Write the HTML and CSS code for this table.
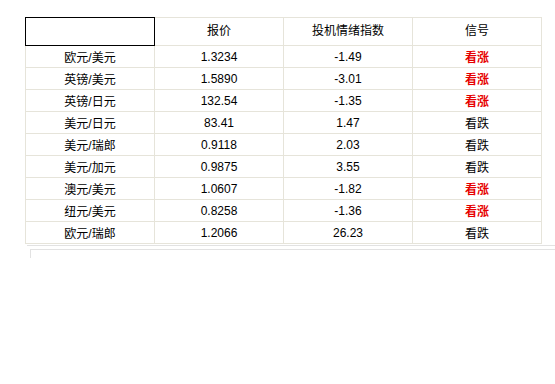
FILE: index.html
```html
<!DOCTYPE html>
<html lang="zh-CN">
<head>
    <meta charset="UTF-8">
    <title>外汇信号</title>
    <link rel="stylesheet" href="styles.css">
</head>
<body>
    <table class="quotes">
        <tr class="head">
            <th class="blank"></th>
            <th>报价</th>
            <th>投机情绪指数</th>
            <th>信号</th>
        </tr>
        <tr><td>欧元/美元</td><td>1.3234</td><td>-1.49</td><td class="up">看涨</td></tr>
        <tr><td>英镑/美元</td><td>1.5890</td><td>-3.01</td><td class="up">看涨</td></tr>
        <tr><td>英镑/日元</td><td>132.54</td><td>-1.35</td><td class="up">看涨</td></tr>
        <tr><td>美元/日元</td><td>83.41</td><td>1.47</td><td>看跌</td></tr>
        <tr><td>美元/瑞郎</td><td>0.9118</td><td>2.03</td><td>看跌</td></tr>
        <tr><td>美元/加元</td><td>0.9875</td><td>3.55</td><td>看跌</td></tr>
        <tr><td>澳元/美元</td><td>1.0607</td><td>-1.82</td><td class="up">看涨</td></tr>
        <tr><td>纽元/美元</td><td>0.8258</td><td>-1.36</td><td class="up">看涨</td></tr>
        <tr><td>欧元/瑞郎</td><td>1.2066</td><td>26.23</td><td>看跌</td></tr>
    </table>
    <div class="footer-rule"></div>
    <div class="next-box"></div>
</body>
</html>
```

FILE: styles.css
```css
body {
    margin: 0;
    padding: 17px 0 0 25px;
    background: #fff;
    font-family: "Liberation Sans", "Noto Sans CJK SC", sans-serif;
    font-size: 12px;
    color: #000;
    overflow: hidden;
}

.quotes {
    border-collapse: collapse;
    table-layout: fixed;
    width: 517px;
}

.quotes th,
.quotes td {
    border: 1px solid #e6e4da;
    width: 129px;
    padding: 0;
    text-align: center;
    font-weight: normal;
}

.quotes th {
    height: 28px;
    vertical-align: top;
    padding-top: 3px;
    box-sizing: border-box;
}

.quotes td {
    height: 21px;
    vertical-align: middle;
}

.quotes th.blank {
    border: 1px solid #000;
}

.quotes td.up {
    color: #e60000;
    font-weight: bold;
}

.footer-rule {
    margin: 1px 0 0 2px;
    height: 0;
    border-top: 1px solid #e2e2e2;
}

.next-box {
    margin: 3px 0 0 5px;
    height: 8px;
    border-top: 1px solid #e2e2e2;
    border-left: 1px solid #e2e2e2;
}
```
